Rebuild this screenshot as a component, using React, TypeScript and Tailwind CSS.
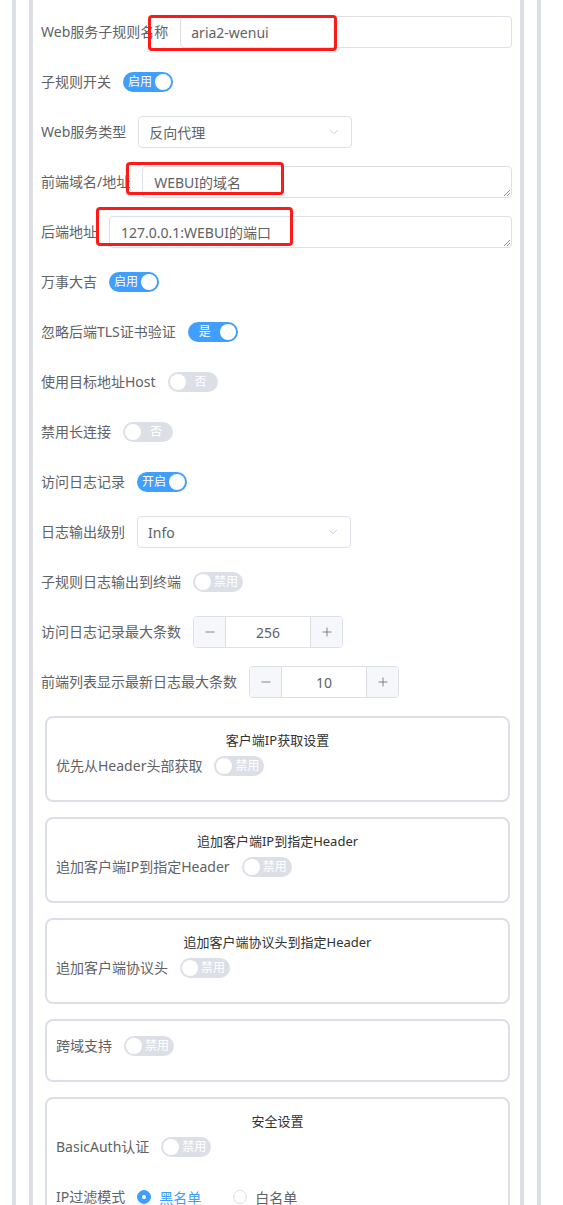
import React from "react";
import { ChevronDown, Minus, Plus } from "lucide-react";

const Switch = ({ on, text }: { on: boolean; text: string }) => (
  <div
    className={
      "flex h-5 w-[50px] shrink-0 items-center rounded-full px-[2px] " +
      (on ? "bg-[#409eff]" : "bg-[#dcdfe6]")
    }
  >
    {!on && <span className="h-4 w-4 shrink-0 rounded-full bg-white" />}
    <span className="flex-1 text-center text-[12px] leading-5 text-white">{text}</span>
    {on && <span className="h-4 w-4 shrink-0 rounded-full bg-white" />}
  </div>
);

const Item = ({ label, children }: { label: string; children: React.ReactNode }) => (
  <div className="mb-[18px] flex h-8 items-center">
    <span className="shrink-0 whitespace-nowrap pr-3 text-[14px] leading-8 text-[#606266]">{label}</span>
    {children}
  </div>
);

const TextInput = ({ value }: { value: string }) => (
  <div className="flex h-8 flex-1 items-center rounded border border-[#dcdfe6] px-[10px] text-[14px] text-[#606266]">
    {value}
  </div>
);

const TextArea = ({ value }: { value: string }) => (
  <div className="relative flex h-8 flex-1 items-center rounded border border-[#dcdfe6] px-[11px] text-[14px] text-[#606266]">
    {value}
    <svg className="absolute bottom-[1px] right-[1px]" width="7" height="7" viewBox="0 0 7 7">
      <line x1="1" y1="7" x2="7" y2="1" stroke="#909399" strokeWidth="1" />
      <line x1="4" y1="7" x2="7" y2="4" stroke="#909399" strokeWidth="1" />
    </svg>
  </div>
);

const Select = ({ value }: { value: string }) => (
  <div className="flex h-8 w-[214px] items-center justify-between rounded border border-[#dcdfe6] pl-[10px] pr-[10px] text-[14px] text-[#606266]">
    <span>{value}</span>
    <ChevronDown size={14} strokeWidth={1.5} color="#c0c4cc" />
  </div>
);

const NumberInput = ({ value }: { value: number }) => (
  <div className="flex h-8 w-[150px] overflow-hidden rounded border border-[#dcdfe6] text-[14px] text-[#606266]">
    <div className="flex w-8 items-center justify-center border-r border-[#dcdfe6] bg-[#f5f7fa]">
      <Minus size={14} strokeWidth={1.3} color="#606266" />
    </div>
    <div className="flex flex-1 items-center justify-center">{value}</div>
    <div className="flex w-8 items-center justify-center border-l border-[#dcdfe6] bg-[#f5f7fa]">
      <Plus size={14} strokeWidth={1.3} color="#606266" />
    </div>
  </div>
);

const Box = ({
  title,
  children,
}: {
  title?: string;
  children: React.ReactNode;
}) => (
  <div className={"mb-[15px] ml-1 mr-[2px] rounded-lg border-2 border-[#dcdfe6] px-[9px] " + (title ? "pt-3" : "pt-[9px]")}>
    {title && <div className="h-5 text-center text-[13px] leading-5 text-[#303133]">{title}</div>}
    {children}
  </div>
);

const Radio = ({ checked, label }: { checked: boolean; label: string }) => (
  <div className="mr-8 flex items-center">
    <span
      className={
        "flex h-[14px] w-[14px] items-center justify-center rounded-full border " +
        (checked ? "border-[#409eff] bg-[#409eff]" : "border-[#dcdfe6] bg-white")
      }
    >
      {checked && <span className="h-1 w-1 rounded-full bg-white" />}
    </span>
    <span className={"ml-2 text-[14px] " + (checked ? "text-[#409eff]" : "text-[#606266]")}>{label}</span>
  </div>
);

export default function App() {
  return (
    <div className="relative h-[1205px] w-[563px] overflow-hidden bg-white font-['Noto_Sans','Noto_Sans_CJK_SC',sans-serif]">
      <div className="ml-[12px] h-full w-[529px] border-x-4 border-[#dcdfe6] px-[13px]">
        <div className="h-full border-x-4 border-[#dcdfe6] px-2 pt-4">
          <Item label="Web服务子规则名称">
            <TextInput value="aria2-wenui" />
          </Item>
          <Item label="子规则开关">
            <Switch on text="启用" />
          </Item>
          <Item label="Web服务类型">
            <Select value="反向代理" />
          </Item>
          <Item label="前端域名/地址">
            <TextArea value="WEBUI的域名" />
          </Item>
          <Item label="后端地址">
            <TextArea value="127.0.0.1:WEBUI的端口" />
          </Item>
          <Item label="万事大吉">
            <Switch on text="启用" />
          </Item>
          <Item label="忽略后端TLS证书验证">
            <Switch on text="是" />
          </Item>
          <Item label="使用目标地址Host">
            <Switch on={false} text="否" />
          </Item>
          <Item label="禁用长连接">
            <Switch on={false} text="否" />
          </Item>
          <Item label="访问日志记录">
            <Switch on text="开启" />
          </Item>
          <Item label="日志输出级别">
            <Select value="Info" />
          </Item>
          <Item label="子规则日志输出到终端">
            <Switch on={false} text="禁用" />
          </Item>
          <Item label="访问日志记录最大条数">
            <NumberInput value={256} />
          </Item>
          <Item label="前端列表显示最新日志最大条数">
            <NumberInput value={10} />
          </Item>

          <Box title="客户端IP获取设置">
            <Item label="优先从Header头部获取">
              <Switch on={false} text="禁用" />
            </Item>
          </Box>
          <Box title="追加客户端IP到指定Header">
            <Item label="追加客户端IP到指定Header">
              <Switch on={false} text="禁用" />
            </Item>
          </Box>
          <Box title="追加客户端协议头到指定Header">
            <Item label="追加客户端协议头">
              <Switch on={false} text="禁用" />
            </Item>
          </Box>
          <Box>
            <Item label="跨域支持">
              <Switch on={false} text="禁用" />
            </Item>
          </Box>
          <Box title="安全设置">
            <Item label="BasicAuth认证">
              <Switch on={false} text="禁用" />
            </Item>
            <Item label="IP过滤模式">
              <Radio checked label="黑名单" />
              <Radio checked={false} label="白名单" />
            </Item>
          </Box>
        </div>
      </div>

      {/* red annotation boxes */}
      <div className="absolute left-[148px] top-[15px] h-[36px] w-[189px] rounded-sm border-[3px] border-[#ff1a1a]" />
      <div className="absolute left-[126px] top-[162px] h-[33px] w-[158px] rounded-sm border-[3px] border-[#ff1a1a]" />
      <div className="absolute left-[96px] top-[207px] h-[39px] w-[197px] rounded-sm border-[3px] border-[#ff1a1a]" />
    </div>
  );
}
